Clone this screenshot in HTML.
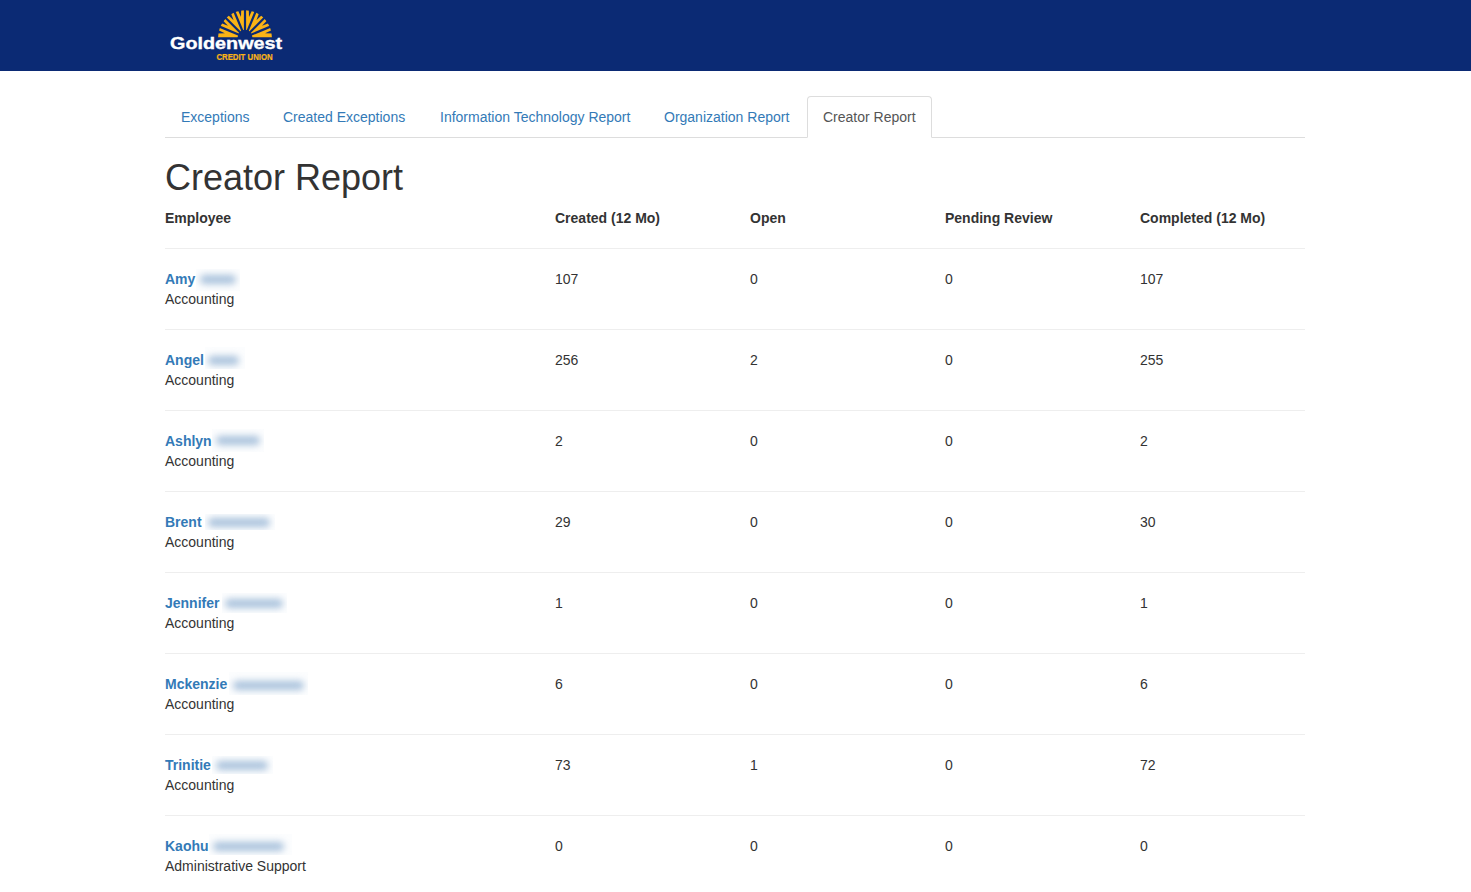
<!DOCTYPE html>
<html><head><meta charset="utf-8">
<style>
*{box-sizing:border-box;margin:0;padding:0}
html,body{width:1471px;height:892px;overflow:hidden;background:#fff}
body{font-family:"Liberation Sans",sans-serif;font-size:14px;line-height:20px;color:#333;position:relative}
.hdr{position:absolute;left:0;top:0;width:1471px;height:71px;background:#0b2a74}
.logo{position:absolute;left:165px;top:0;width:130px;height:71px}
.lg1{position:absolute;left:170px;top:34px;font-size:17px;line-height:20px;font-weight:bold;color:#fff;white-space:nowrap;transform-origin:0 0;transform:scaleX(1.165);text-shadow:0.35px 0 0 #fff}
.lg2{position:absolute;left:216px;top:51px;font-size:8.4px;line-height:10px;font-weight:bold;color:#fbb416;white-space:nowrap;transform-origin:0 0;transform:scaleX(0.93);text-shadow:0.3px 0 0 #fbb416}
.nav{position:absolute;left:165px;top:96px;width:1140px;height:42px;border-bottom:1px solid #ddd}
.nav a{position:absolute;top:0;height:42px;padding:10px 15px;border:1px solid transparent;border-radius:4px 4px 0 0;color:#337ab7;text-decoration:none;white-space:nowrap}
.nav a.act{color:#555;background:#fff;border-color:#ddd;border-bottom-color:transparent}
h1{position:absolute;left:165px;top:158px;font-size:36px;line-height:39.6px;font-weight:normal;color:#333;white-space:nowrap}
.row{position:absolute;left:165px;width:1140px}
.row div{position:absolute;top:0;white-space:nowrap}
.th{top:208px;font-weight:bold}
.line{position:absolute;left:165px;width:1140px;height:1px;background:#eee}
.nm{color:#337ab7;font-weight:bold}
.bx{position:absolute;background:#fcfdfe;overflow:hidden}
.bx i{position:absolute;height:9px;background:#a9c2dc;border-radius:5px;filter:blur(3.6px)}
</style></head><body>
<div class="hdr"><svg class="sun" width="1471" height="71" style="position:absolute;left:0;top:0"><path d="M218.10,37.20 A26.9,26.9 0 0 1 271.90,37.20 Z" fill="#fbb416"/><line x1="245.00" y1="37.20" x2="271.70" y2="26.14" stroke="#0b2a74" stroke-width="2.2"/><line x1="245.00" y1="37.20" x2="265.44" y2="16.76" stroke="#0b2a74" stroke-width="2.2"/><line x1="245.00" y1="37.20" x2="256.06" y2="10.50" stroke="#0b2a74" stroke-width="2.2"/><line x1="245.00" y1="37.20" x2="245.00" y2="8.30" stroke="#0b2a74" stroke-width="2.2"/><line x1="245.00" y1="37.20" x2="233.94" y2="10.50" stroke="#0b2a74" stroke-width="2.2"/><line x1="245.00" y1="37.20" x2="224.56" y2="16.76" stroke="#0b2a74" stroke-width="2.2"/><line x1="245.00" y1="37.20" x2="218.30" y2="26.14" stroke="#0b2a74" stroke-width="2.2"/><polygon points="265.11,33.20 272.03,30.09 272.70,33.42" fill="#0b2a74"/><polygon points="262.05,25.81 267.25,20.29 269.14,23.11" fill="#0b2a74"/><polygon points="256.39,20.15 259.09,13.06 261.91,14.95" fill="#0b2a74"/><polygon points="249.00,17.09 248.78,9.50 252.11,10.17" fill="#0b2a74"/><polygon points="241.00,17.09 237.89,10.17 241.22,9.50" fill="#0b2a74"/><polygon points="233.61,20.15 228.09,14.95 230.91,13.06" fill="#0b2a74"/><polygon points="227.95,25.81 220.86,23.11 222.75,20.29" fill="#0b2a74"/><polygon points="224.89,33.20 217.30,33.42 217.97,30.09" fill="#0b2a74"/><circle cx="245" cy="37.2" r="7.4" fill="#0b2a74"/><text x="170.1" y="49.2" font-family="Liberation Sans" font-weight="bold" font-size="17" fill="#fff" stroke="#fff" stroke-width="0.35" textLength="112" lengthAdjust="spacingAndGlyphs">Goldenwest</text><text x="216.4" y="59.6" font-family="Liberation Sans" font-weight="bold" font-size="8.4" fill="#fbb416" stroke="#fbb416" stroke-width="0.2" textLength="56.2" lengthAdjust="spacingAndGlyphs">CREDIT UNION</text></svg>
</div>
<div class="nav">
<a style="left:0">Exceptions</a>
<a style="left:102px">Created Exceptions</a>
<a style="left:259px">Information Technology Report</a>
<a style="left:483px">Organization Report</a>
<a class="act" style="left:642px">Creator Report</a>
</div>
<h1>Creator Report</h1>
<div class="row th">
<div style="left:0">Employee</div>
<div style="left:390px">Created (12 Mo)</div>
<div style="left:585px">Open</div>
<div style="left:780px">Pending Review</div>
<div style="left:975px">Completed (12 Mo)</div>
</div>
<div class="line" style="top:248px"></div>
<div class="row" style="top:269px"><div style="left:0"><span class="nm">Amy</span><br>Accounting</div><div style="left:390px">107</div><div style="left:585px">0</div><div style="left:780px">0</div><div style="left:975px">107</div></div>
<div class="line" style="top:329px"></div>
<div class="row" style="top:350px"><div style="left:0"><span class="nm">Angel</span><br>Accounting</div><div style="left:390px">256</div><div style="left:585px">2</div><div style="left:780px">0</div><div style="left:975px">255</div></div>
<div class="line" style="top:410px"></div>
<div class="row" style="top:431px"><div style="left:0"><span class="nm">Ashlyn</span><br>Accounting</div><div style="left:390px">2</div><div style="left:585px">0</div><div style="left:780px">0</div><div style="left:975px">2</div></div>
<div class="line" style="top:491px"></div>
<div class="row" style="top:512px"><div style="left:0"><span class="nm">Brent</span><br>Accounting</div><div style="left:390px">29</div><div style="left:585px">0</div><div style="left:780px">0</div><div style="left:975px">30</div></div>
<div class="line" style="top:572px"></div>
<div class="row" style="top:593px"><div style="left:0"><span class="nm">Jennifer</span><br>Accounting</div><div style="left:390px">1</div><div style="left:585px">0</div><div style="left:780px">0</div><div style="left:975px">1</div></div>
<div class="line" style="top:653px"></div>
<div class="row" style="top:674px"><div style="left:0"><span class="nm">Mckenzie</span><br>Accounting</div><div style="left:390px">6</div><div style="left:585px">0</div><div style="left:780px">0</div><div style="left:975px">6</div></div>
<div class="line" style="top:734px"></div>
<div class="row" style="top:755px"><div style="left:0"><span class="nm">Trinitie</span><br>Accounting</div><div style="left:390px">73</div><div style="left:585px">1</div><div style="left:780px">0</div><div style="left:975px">72</div></div>
<div class="line" style="top:815px"></div>
<div class="row" style="top:836px"><div style="left:0"><span class="nm">Kaohu</span><br>Administrative Support</div><div style="left:390px">0</div><div style="left:585px">0</div><div style="left:780px">0</div><div style="left:975px">0</div></div>
<div class="bx" style="left:196px;top:269px;width:44px;height:22px"><i style="left:4.0px;top:6.1px;width:36.0px"></i></div>
<div class="bx" style="left:205px;top:347px;width:40px;height:22px"><i style="left:3.4px;top:9.1px;width:30.3px"></i></div>
<div class="bx" style="left:212px;top:429px;width:52px;height:23px"><i style="left:3.5px;top:7.3px;width:44.5px"></i></div>
<div class="bx" style="left:205px;top:514px;width:70px;height:16px"><i style="left:2.9px;top:3.9px;width:62.1px"></i></div>
<div class="bx" style="left:222px;top:593px;width:65px;height:20px"><i style="left:3.0px;top:6.0px;width:58.0px"></i></div>
<div class="bx" style="left:229px;top:672px;width:79px;height:23px"><i style="left:4.0px;top:8.5px;width:70.6px"></i></div>
<div class="bx" style="left:212px;top:756px;width:61px;height:18px"><i style="left:3.5px;top:5.2px;width:52.2px"></i></div>
<div class="bx" style="left:209px;top:834px;width:83px;height:21px"><i style="left:4.3px;top:7.7px;width:70.7px"></i></div>
</body></html>
